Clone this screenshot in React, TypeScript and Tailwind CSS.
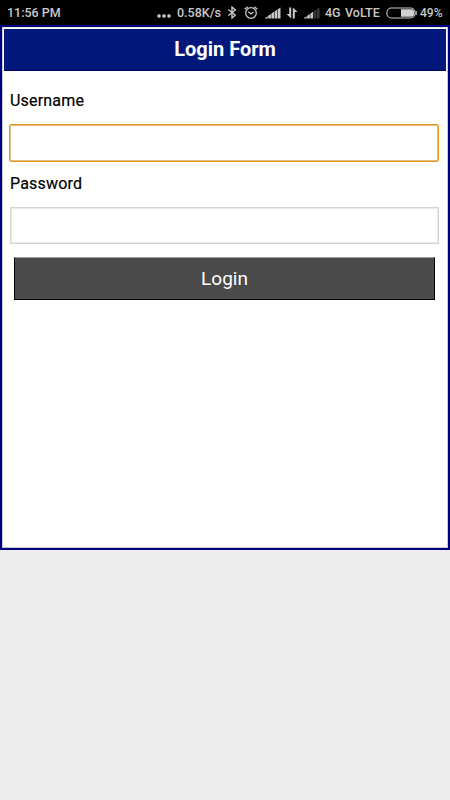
interface FieldProps {
  id: string;
  label: string;
  type: string;
  labelClass: string;
  inputClass: string;
}

const BluetoothIcon = () => (
  <svg className="ml-[6px] h-[13px] w-[10px] shrink-0" viewBox="0 0 10 13" fill="none" stroke="#c8c8c8" strokeWidth="1.4">
    <path d="M1.3 3.5L8.3 9L5 12V1L8.3 4L1.3 9.5" />
  </svg>
);

const AlarmIcon = () => (
  <svg className="ml-[7px] h-[13px] w-[14px] shrink-0" viewBox="0 0 14 13" fill="none" stroke="#c8c8c8" strokeWidth="1.3">
    <circle cx="7" cy="7" r="5.3" />
    <path d="M0.6 3.3L3.7 0.7M13.4 3.3L10.3 0.7M4.3 5.7L7 8L9.6 5.9" />
  </svg>
);

const SignalIcon = ({ level, className }: { level: number; className: string }) => (
  <svg className={className} viewBox="0 0 16 12">
    {[0, 1, 2, 3, 4].map((i) => (
      <path
        key={i}
        d={`M${i * 3.2} ${11 - i * 2.2}L${i * 3.2 + 2.7} ${9.2 - i * 2.2}V11.5H${i * 3.2}Z`}
        fill={i < level ? "#c8c8c8" : "#383838"}
      />
    ))}
  </svg>
);

const DataIcon = () => (
  <svg className="ml-[5px] h-[12px] w-[12px] shrink-0" viewBox="0 0 12 12" fill="#c8c8c8">
    <path d="M3.2 0.5H5.2V11.5L0.5 7H3.2ZM6.8 11.5V0.5L11.5 5H8.8V11.5Z" />
  </svg>
);

const BatteryIcon = () => (
  <svg className="ml-[6px] h-[12px] w-[31px] shrink-0" viewBox="0 0 31 12">
    <rect x="0.9" y="1" width="28.2" height="10" rx="4.5" fill="none" stroke="#c8c8c8" strokeWidth="1.1" />
    <path d="M15 2.2H25.5Q28.1 2.2 28.1 5V7Q28.1 9.8 25.5 9.8H15Z" fill="#d0d0d0" />
    <path d="M30.2 4V8" stroke="#c8c8c8" strokeWidth="1.1" />
  </svg>
);

const StatusBar = () => (
  <div className="flex h-[25px] items-center bg-black text-[12px] font-medium whitespace-nowrap text-[#c8c8c8]">
    <span className="ml-[7px] w-[150px] pt-px text-[12.5px]">11:56 PM</span>
    <svg className="mt-[7px] h-[4px] w-[14px] shrink-0" viewBox="0 0 14 4" fill="#d0d0d0">
      <circle cx="2" cy="2" r="1.8" />
      <circle cx="7" cy="2" r="1.8" />
      <circle cx="12" cy="2" r="1.8" />
    </svg>
    <span className="ml-[6px] w-[44px] pt-px text-[12.5px]">0.58K/s</span>
    <BluetoothIcon />
    <AlarmIcon />
    <SignalIcon level={5} className="ml-[7px] h-[12px] w-[16px] shrink-0" />
    <DataIcon />
    <SignalIcon level={3} className="ml-[6px] h-[12px] w-[16px] shrink-0" />
    <span className="ml-[5px] w-[15px] pt-px text-[12.5px]">4G</span>
    <span className="ml-[5px] w-[35px] pt-px text-[12.5px]">VoLTE</span>
    <BatteryIcon />
    <span className="ml-[3px]">49%</span>
  </div>
);

const Field: React.FC<FieldProps> = ({ id, label, type, labelClass, inputClass }) => {
  return (
    <div>
      <label htmlFor={id} className={labelClass}>
        {label}
      </label>
      <input id={id} type={type} className={inputClass} />
    </div>
  );
};

const App = () => {
  return (
    <div className="h-[800px] w-[450px] overflow-hidden bg-[#ececec] font-['Roboto',sans-serif]">
      <StatusBar />
      <div className="h-[525px] border-2 border-[#00007b] bg-white">
        <div className="h-full border border-[#c9c9d6] border-t-[#e6e6ee]">
          <div className="mx-px mt-px flex h-[42px] items-center justify-center border-b border-[#00005f] bg-[#03187a] pb-[2px]">
            <h1 className="text-[20px] leading-6 font-bold text-white">Login Form</h1>
          </div>
          <form className="pt-[19px]">
            <Field
              id="username"
              label="Username"
              type="text"
              labelClass="ml-[7px] block h-[34px] text-[16px] leading-[22px] tracking-[0.2px] text-black [-webkit-text-stroke:0.2px_black]"
              inputClass="ml-[6px] block h-[38px] w-[430px] rounded-[2px] border border-[#e59a1c] bg-white px-2 shadow-[inset_0_0_0_1px_#e0bd88] outline-none"
            />
            <Field
              id="password"
              label="Password"
              type="password"
              labelClass="ml-[7px] block h-[45px] pt-[11px] text-[16px] leading-[22px] tracking-[0.2px] text-black [-webkit-text-stroke:0.2px_black]"
              inputClass="ml-[7px] block h-[37px] w-[429px] border border-[#d4d4d4] bg-white px-2 shadow-[inset_0_0_0_1px_#ebebeb] outline-none"
            />
            <button
              type="button"
              className="mt-[13px] ml-[11px] block h-[43px] w-[421px] border border-black border-t-[#a0a0a0] bg-[#4a4a4a] text-[19px] leading-[24px] text-white"
            >
              Login
            </button>
          </form>
        </div>
      </div>
    </div>
  );
};

export default App;
